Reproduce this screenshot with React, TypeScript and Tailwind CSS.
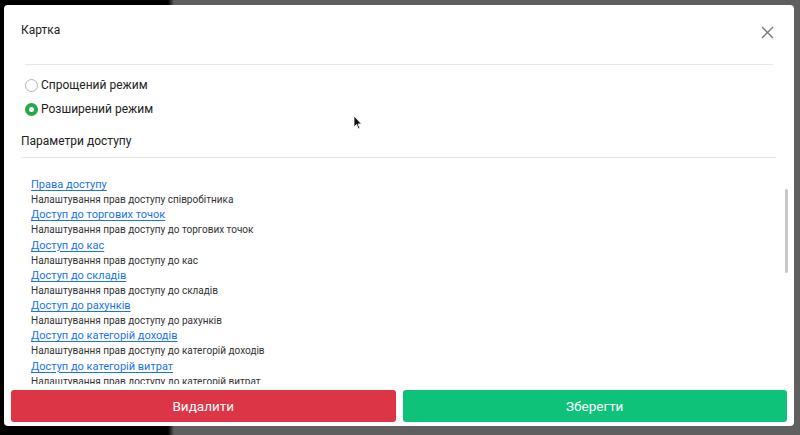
import React from 'react';

const items = [
  { title: 'Права доступу', desc: 'Налаштування прав доступу співробітника' },
  { title: 'Доступ до торгових точок', desc: 'Налаштування прав доступу до торгових точок' },
  { title: 'Доступ до кас', desc: 'Налаштування прав доступу до кас' },
  { title: 'Доступ до складів', desc: 'Налаштування прав доступу до складів' },
  { title: 'Доступ до рахунків', desc: 'Налаштування прав доступу до рахунків' },
  { title: 'Доступ до категорій доходів', desc: 'Налаштування прав доступу до категорій доходів' },
  { title: 'Доступ до категорій витрат', desc: 'Налаштування прав доступу до категорій витрат' },
];

const Radio: React.FC<{ checked?: boolean; label: string }> = ({ checked, label }) => (
  <label className="flex items-center gap-[3px] h-[24px]">
    {checked ? (
      <span className="w-[13px] h-[13px] rounded-full bg-[#27a745] flex items-center justify-center">
        <span className="w-[5px] h-[5px] rounded-full bg-white" />
      </span>
    ) : (
      <span className="w-[13px] h-[13px] rounded-full border border-[#b5b5b5] bg-white" />
    )}
    <span className="text-[12px] text-[#222]">{label}</span>
  </label>
);

const App: React.FC = () => {
  return (
    <div
      className="w-[800px] h-[435px] overflow-hidden pt-[5px] pl-[4px] bg-[linear-gradient(to_right,#000_168px,#5f5f5f_174px)]"
      style={{ fontFamily: 'Roboto, "Noto Sans", sans-serif' }}
    >
      <div className="relative w-[790px] h-[421px] rounded-[4px] bg-white flex flex-col">
        <div className="flex items-center justify-between pl-[17px] pr-[20px] h-[52px]">
          <span className="text-[12px] text-[#222] mt-[-2px]">Картка</span>
          <svg width="13" height="13" viewBox="0 0 13 13" className="mt-[3px]">
            <path d="M1 1 L12 12 M12 1 L1 12" stroke="#777" strokeWidth="1.3" />
          </svg>
        </div>
        <div className="mx-[21px] border-t border-[#e8e8e8] mt-[7px]" />
        <div className="pl-[21px] pt-[8px] flex flex-col">
          <Radio label="Спрощений режим" />
          <Radio checked label="Розширений режим" />
        </div>
        <div className="pl-[17px] pt-[4px] h-[36px] flex items-center">
          <span className="text-[12px] text-[#222]">Параметри доступу</span>
        </div>
        <div className="ml-[17px] mr-[18px] border-t border-[#e8e8e8]" />
        <div className="relative flex-1 overflow-hidden pl-[27px] pt-[19px] mb-[6px]">
          <div className="flex flex-col">
            {items.map((it) => (
              <div key={it.title} className="flex flex-col h-[30.3px]">
                <a className="text-[11px] leading-[15px] h-[15px] text-[#1a73e8] underline underline-offset-2">
                  {it.title}
                </a>
                <span className="text-[10px] leading-[15px] h-[15px] text-[#333]">{it.desc}</span>
              </div>
            ))}
          </div>
          <div className="absolute right-[6px] top-[31px] w-[3px] h-[84px] rounded-full bg-[#c9c9c9]" />
        </div>
        <div className="flex gap-[7px] px-[7px] pb-[4px]">
          <button className="flex-1 h-[32px] rounded-[3px] bg-[#dc3545] text-white text-[13.5px]">Видалити</button>
          <button className="flex-1 h-[32px] rounded-[3px] bg-[#0ec27a] text-white text-[13.5px]">Зберегти</button>
        </div>
        <svg
          className="absolute left-[349px] top-[110px]"
          width="10"
          height="15"
          viewBox="0 0 10 15"
        >
          <path d="M1 1 L1 12 L3.5 9.5 L5.5 14 L7 13.3 L5 9 L8.5 9 Z" fill="#111" stroke="#fff" strokeWidth="0.8" />
        </svg>
      </div>
    </div>
  );
};

export default App;
